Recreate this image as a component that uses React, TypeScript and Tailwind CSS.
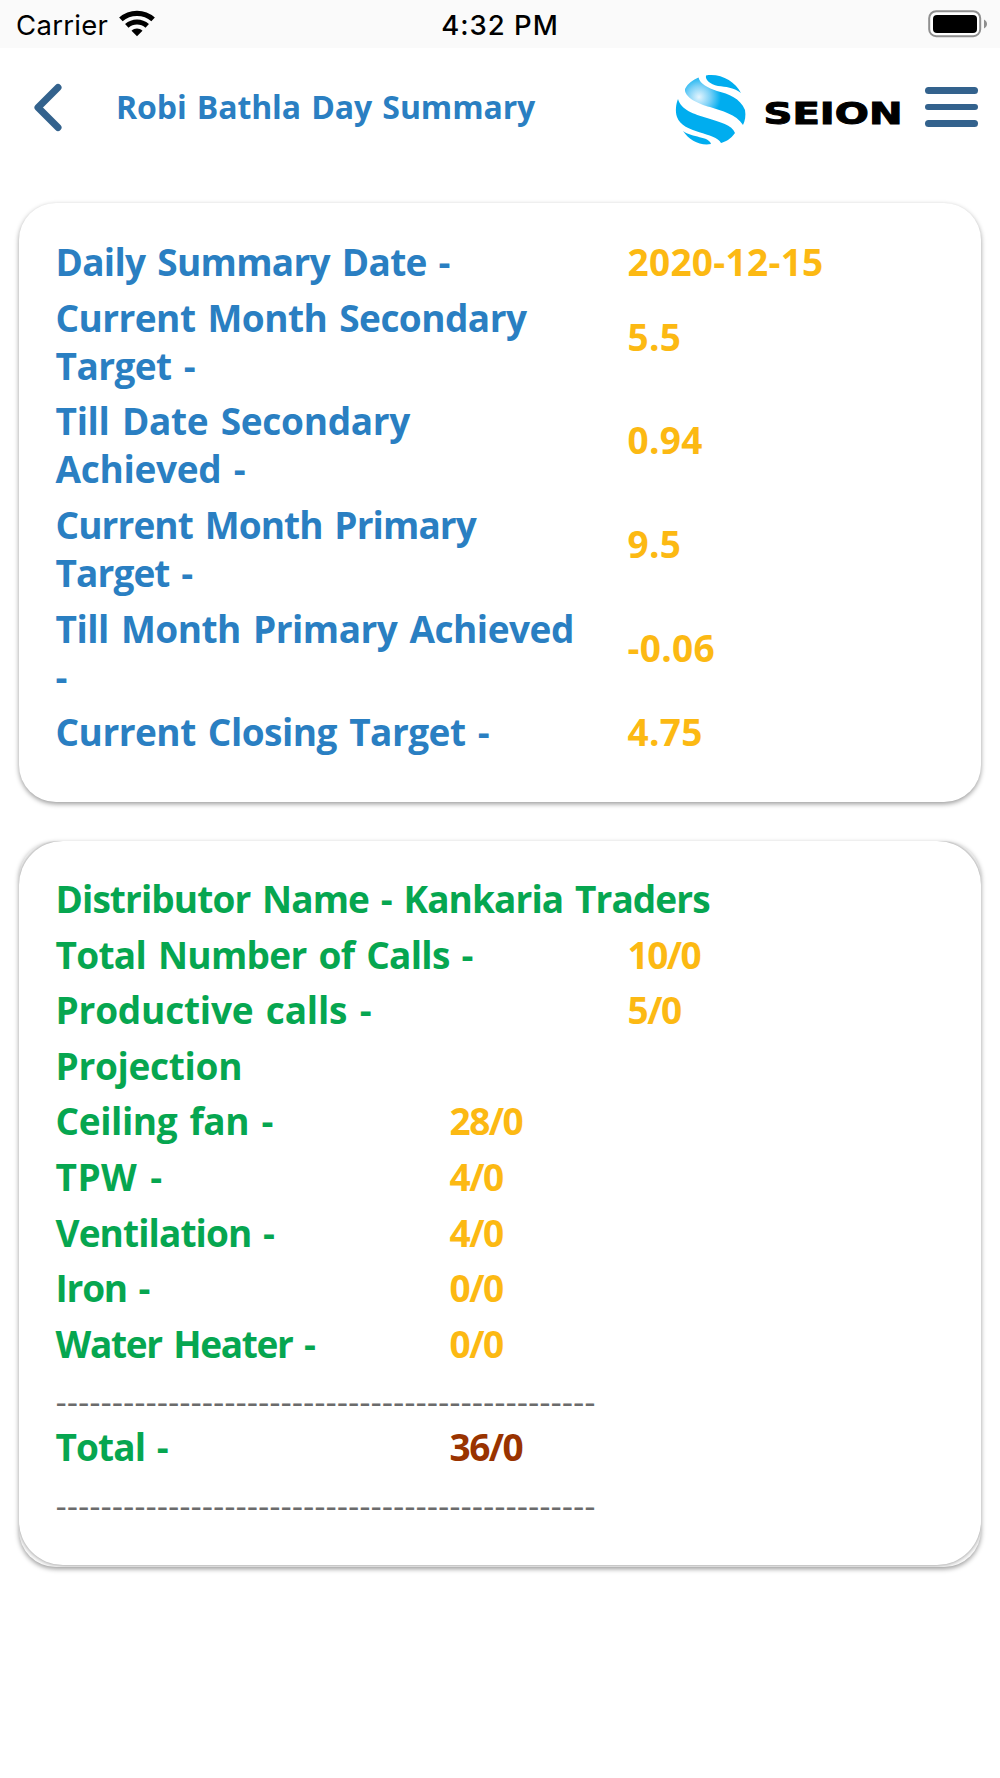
const targets = [
  { label: "Daily Summary Date -", value: "2020-12-15", tracking: "tracking-[-0.7px]" },
  { label: "Current Month Secondary Target -", value: "5.5", tracking: "tracking-[-0.55px]", wraps: true },
  { label: "Till Date Secondary Achieved -", value: "0.94", tracking: "tracking-[-0.3px]", wraps: true },
  { label: "Current Month Primary Target -", value: "9.5", tracking: "tracking-[-0.9px]", wraps: true },
  { label: "Till Month Primary Achieved -", value: "-0.06", tracking: "tracking-[-0.5px]", wraps: true },
  { label: "Current Closing Target -", value: "4.75", tracking: "tracking-[-0.5px]" },
];

const calls = [
  { label: "Total Number of Calls -", value: "10/0", tracking: "tracking-[-0.7px]" },
  { label: "Productive calls -", value: "5/0", tracking: "tracking-[-0.2px]" },
];

const projection = [
  { label: "Ceiling fan -", value: "28/0", tracking: "tracking-[-0.4px]" },
  { label: "TPW -", value: "4/0", tracking: "tracking-[0.45px]" },
  { label: "Ventilation -", value: "4/0", tracking: "tracking-[-0.9px]" },
  { label: "Iron -", value: "0/0", tracking: "tracking-[-1.2px]" },
  { label: "Water Heater -", value: "0/0", tracking: "tracking-[-1.3px]" },
];

const divider = "-".repeat(48);

function StatusBar() {
  return (
    <div className="grid h-12 grid-cols-3 items-center bg-[#fafafa] px-[16px] pt-[3px] font-['Inter',sans-serif] text-[27.5px] text-black">
      <div className="flex items-center gap-[11px]">
        <span className="tracking-[0.3px]">Carrier</span>
        <svg className="-mt-[4px] h-[28px] w-[36px]" viewBox="0 0 38 28" fill="none">
          <path d="M2 9.2C11.5.5 26.500.5 36 9.200" stroke="black" strokeWidth="5.500" />
          <path d="M8.200 16C14.500 10.500 23.500 10.500 29.800 16" stroke="black" strokeWidth="5.500" />
          <path d="M13.200 21C16.500 18 21.500 18 24.800 21L19 27Z" fill="black" />
        </svg>
      </div>
      <span className="text-center font-medium tracking-[1px]">4:32 PM</span>
      <svg className="-mt-[3px] h-[28px] w-[60px] translate-x-[4px] justify-self-end" viewBox="0 0 60 28">
        <rect x="1.200" y="1.200" width="51" height="25" rx="7" fill="white" stroke="#8f8f8f" strokeWidth="2" />
        <rect x="5" y="5" width="44" height="18" rx="4" fill="black" />
        <path d="M56 9.500C60 11.500 60 16.500 56 18.500Z" fill="#8f8f8f" />
      </svg>
    </div>
  );
}

function Logo() {
  return (
    <svg className="h-[74px] w-[230px]" viewBox="0 0 230 74">
      <defs>
        <radialGradient id="shine" cx="24" cy="24" r="22" gradientUnits="userSpaceOnUse">
          <stop offset="0" stopColor="#e4f5fe" />
          <stop offset="0.5" stopColor="#7fd2f7" />
          <stop offset="1" stopColor="#00adef" />
        </radialGradient>
      </defs>
      <path d="M31 2.500C45 0 60 8 66 20C58 14 51 14 43 13C35 11 30 7 31 2.500Z" fill="#00adef" />
      <path d="M23.500 4.500C25 11 33 15 42 18C54 21 65 25 70 37C71 43 70 48 68 52C61 41 47 38 35 34C23 31 9 24 10 16C13 10 18 7 23.500 4.500Z" fill="url(#shine)" />
      <path d="M3 26C6 37 19 41 32 45C45 49 57 52 60 60C56 66 50 69 46 70C41 59 8 61 2 44C0 38 1 31 3 26Z" fill="#00adef" />
      <path d="M8 58C17 65 34 63 36 71C25 73 14 67 8 58Z" fill="#00adef" />
      <text
        x="88.500"
        y="51"
        className="font-['DejaVu_Sans',sans-serif] text-[30px] font-bold"
        textLength="139"
        lengthAdjust="spacingAndGlyphs"
        stroke="black"
        strokeWidth="1"
      >
        SEION
      </text>
    </svg>
  );
}

function Header() {
  return (
    <header className="flex h-[118px] items-center pr-[22px] pl-[34px]">
      <svg className="h-[50px] w-7" viewBox="0 0 28 50" fill="none">
        <path d="M24 5.500L4 25.500L24 45.500" stroke="#33628d" strokeWidth="7" strokeLinecap="round" strokeLinejoin="round" />
      </svg>
      <h1 className="ml-[54px] text-[32px] font-bold tracking-[-0.1px] whitespace-nowrap text-[#2a7fc2] [word-spacing:2px]">
        Robi Bathla Day Summary
      </h1>
      <div className="ml-auto flex items-center gap-[20px]">
        <div className="pt-[5px]">
          <Logo />
        </div>
        <div className="flex flex-col gap-[10px]">
          <span className="h-[6.5px] w-[53px] rounded-full bg-[#33628d]" />
          <span className="h-[6.5px] w-[53px] rounded-full bg-[#33628d]" />
          <span className="h-[6.5px] w-[53px] rounded-full bg-[#33628d]" />
        </div>
      </div>
    </header>
  );
}

type RowProps = { label: string; value: string; tracking: string; wraps?: boolean };

function Value({ value }: { value: string }) {
  // counts such as 28/0 are set tighter than plain numbers
  const tracking = value.includes("/") ? "tracking-[-1.5px]" : "tracking-[0.3px]";
  return <span className={tracking}>{value}</span>;
}

function SummaryRow({ label, value, tracking, wraps }: RowProps) {
  return (
    <div className="grid grid-cols-[572px_1fr] items-center">
      <span className={`w-[524px] ${tracking}`}>{label}</span>
      <span className={wraps ? "pb-[10px] text-[#fcb913]" : "text-[#fcb913]"}>
        <Value value={value} />
      </span>
    </div>
  );
}

function ProjectionRow({ label, value, tracking }: RowProps) {
  return (
    <div className="grid grid-cols-[394px_1fr] items-center">
      <span className={tracking}>{label}</span>
      <span className="text-[#fcb913]">
        <Value value={value} />
      </span>
    </div>
  );
}

function Divider() {
  return (
    <p className="h-[48.1px] pt-[3px] font-['Liberation_Sans',sans-serif] text-[34px] font-normal tracking-[-0.07px] text-[#6b6b6b]">
      {divider}
    </p>
  );
}

export default function App() {
  return (
    <div className="h-[1778px] w-[1000px] bg-white font-['Open_Sans',sans-serif]">
      <StatusBar />
      <Header />
      <main className="flex flex-col gap-[39px] px-[19px] pt-[37px] text-[37px] leading-[48.1px] font-bold [word-spacing:3px]">
        <section className="flex h-[599px] flex-col gap-[7.5px] rounded-[37px] bg-white pt-[35px] pl-[36.5px] text-[#2a7fc2] shadow-[0_2px_5px_rgba(0,0,0,0.4)]">
          {targets.map((row) => (
            <SummaryRow key={row.label} {...row} />
          ))}
        </section>
        <div className="h-[726px] overflow-hidden rounded-[37px] bg-white shadow-[0_2px_5px_rgba(0,0,0,0.4)]">
          <section className="flex h-[724px] flex-col gap-[7.5px] rounded-[44px] bg-white pt-[34px] pl-[36.5px] text-[#06a650] shadow-[0_0_5px_rgba(0,0,0,0.5)]">
            <h2 className="tracking-[-0.9px]">Distributor Name - Kankaria Traders</h2>
            {calls.map((row) => (
              <SummaryRow key={row.label} {...row} />
            ))}
            <h3 className="tracking-[-0.3px]">Projection</h3>
            {projection.map((row) => (
              <ProjectionRow key={row.label} {...row} />
            ))}
            <div>
              <Divider />
              <div className="grid grid-cols-[394px_1fr]">
                <span className="tracking-[-0.9px]">Total -</span>
                <span className="text-[#993300]">
                  <Value value="36/0" />
                </span>
              </div>
            </div>
            <Divider />
          </section>
        </div>
      </main>
    </div>
  );
}
